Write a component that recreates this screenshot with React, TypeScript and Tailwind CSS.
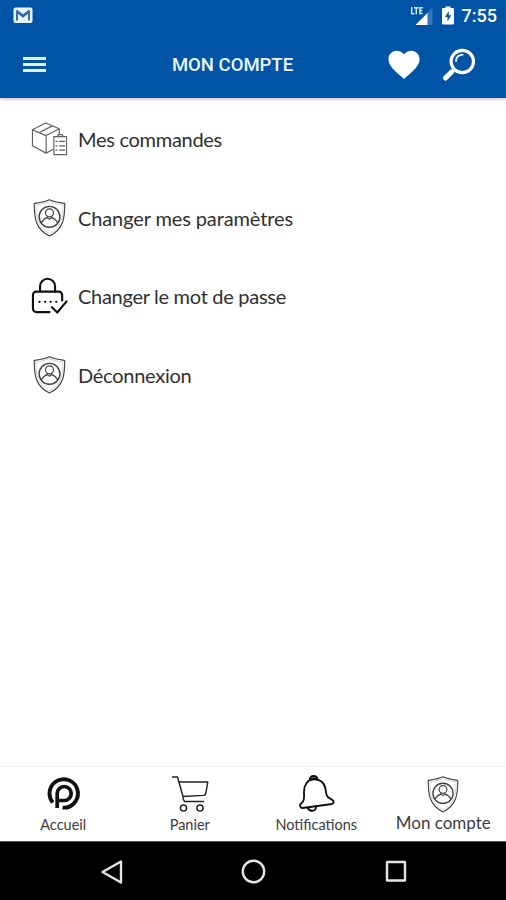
import React from "react";

const lato = "font-['Lato','Liberation_Sans',sans-serif]";
const roboto = "font-['Roboto','Liberation_Sans',sans-serif]";

function GmailIcon() {
  return (
    <svg width="20" height="17" viewBox="0 0 20 17" fill="none">
      <rect x="0.5" y="0.5" width="19" height="15.5" rx="2" fill="#e9f2ff" />
      <path d="M4 13.5V4.8l6 4.7 6-4.7v8.7" stroke="#2a5f9f" strokeWidth="1.8" />
      <path d="M4 3.2l6 4.5 6-4.5" stroke="#2a5f9f" strokeWidth="1" />
    </svg>
  );
}

function SignalIcon() {
  return (
    <svg width="24" height="20" viewBox="0 0 24 20" fill="none">
      <path d="M22.500 1.500V19H5.500z" fill="#3474b8" />
      <path d="M17.500 7V19H5.500z" fill="#fff" />
      <path d="M0 0h13.500v8.500L11 10H0z" fill="#0054a6" />
      <path d="M1.700 1v6.800h2.600M4 1.700h4.600M6.300 1.700v6.600M12.800 1.700H9.900v5.900h2.900M9.900 4.600h2.500" stroke="#d6e6fa" strokeWidth="1.500" />
    </svg>
  );
}

function BatteryIcon() {
  return (
    <svg width="12" height="19" viewBox="0 0 12 19">
      <path d="M3.5 2V.5h5V2H11a1 1 0 0 1 1 1v14.500a1 1 0 0 1-1 1H1a1 1 0 0 1-1-1V3a1 1 0 0 1 1-1z" fill="#fff" />
      <path d="M6.800 5L3 11h2.500v4.500L9.200 9.300H6.800z" fill="#0054a6" />
    </svg>
  );
}

function HeartIcon() {
  return (
    <svg width="32" height="30" viewBox="0 0 32 30">
      <path d="M16 29C11 24 .4 17.500.4 9.300.4 4.200 4.200.7 8.500.7c3.200 0 6 1.500 7.500 3.600C17.500 2.200 20.300.7 23.500.7c4.300 0 8.100 3.500 8.100 8.600C31.600 17.500 21 24 16 29z" fill="#fff" />
    </svg>
  );
}

function SearchIcon() {
  return (
    <svg width="34" height="34" viewBox="0 0 34 34" fill="none" stroke="#fff" strokeLinecap="round">
      <circle cx="20.300" cy="13.500" r="11.200" strokeWidth="3.200" />
      <path d="M12.200 21.800l-3 3" strokeWidth="2.500" />
      <path d="M9.500 24l-6 6" strokeWidth="5" />
      <path d="M14 13c.2-3.800 2.500-6 6.500-6.300" strokeWidth="1.800" />
    </svg>
  );
}

function BoxIcon() {
  return (
    <svg width="38" height="38" viewBox="0 0 38 38" fill="none" stroke="#606060" strokeWidth="1.200" strokeLinejoin="round">
      <path d="M1.500 9.500L15 2.500l14 6L15.500 15.500zM1.500 9.500V26l14 7.500V15.500M29 8.500V15M8 12.500L22 5.500M15.500 33.500l7.500-4" />
      <path d="M23.500 16.500h13V35h-13zM27 16.500l1-2h4l1 2M29 21.500h6M29 26h6M29 30.500h6M25.200 21.500h2M25.200 26h2M25.200 30.500h2" />
    </svg>
  );
}

function ShieldIcon({ size = "h-[38px] w-[33px]" }: { size?: string }) {
  return (
    <svg className={size} viewBox="0 0 33 38" fill="none" stroke="#404040" strokeWidth="1.150" strokeLinejoin="round">
      <path d="M16.500.8C12 3 6.700 3.700 1.200 4.500c.1 13.500.8 25.500 15.300 32.500C31 30 31.700 18 31.800 4.500 26.300 3.700 21 3 16.500.8z" />
      <path d="M16.500 2.800C12.400 4.500 7.800 5.200 3 6c.2 12 1.100 22.300 13.500 28.800C28.900 28.300 29.800 18 30 6 25.200 5.200 20.600 4.500 16.500 2.800z" stroke="#aaa" strokeWidth=".5" />
      <circle cx="16.500" cy="17.800" r="10.400" strokeWidth="1.400" />
      <circle cx="16.500" cy="13.800" r="4" />
      <path d="M8.300 24c1.400-2.800 3.400-4.600 6-5.400l2.200 1.600 2.200-1.600c2.600.8 4.600 2.600 6 5.400M14.300 17v1.800M18.700 17v1.800" />
    </svg>
  );
}

function LockIcon() {
  return (
    <svg width="38" height="38" viewBox="0 0 38 38" fill="none" stroke="#111" strokeWidth="2.200" strokeLinecap="round" strokeLinejoin="round">
      <path d="M9.300 14.500V9a7.700 7.700 0 0 1 15.400 0v5.500" />
      <path d="M19 35.500H5.500A3.500 3.500 0 0 1 2 32V18a3.500 3.500 0 0 1 3.500-3.500h23A3.500 3.500 0 0 1 32 18v5.500" />
      <path d="M21.500 30.500L27 36l9.500-11.500" />
      <path d="M8.700 25h.1M14.500 25h.1M20.200 25h.1M25.900 25h.1" strokeWidth="2.300" />
    </svg>
  );
}

function LogoIcon() {
  return (
    <svg className="ml-[2px]" width="34" height="34" viewBox="0 0 34 34" fill="none" stroke="#111">
      <path d="M5.800 25.500A14.200 14.200 0 1 1 15.500 30.600" strokeWidth="3.900" />
      <path d="M10.200 31V16.500a7 7 0 1 1 7 7h-7" strokeWidth="3.700" />
    </svg>
  );
}

function CartIcon() {
  return (
    <svg width="38" height="38" viewBox="0 0 38 38" fill="none" stroke="#222" strokeWidth="1.450" strokeLinecap="round" strokeLinejoin="round">
      <path d="M1.500 2H6.500l5.500 19.500c-.3 2 .5 3.500 1.500 5h19M8.500 7h28.300l-2 11.500c-.3 1.200-1 1.800-2.300 1.900L12 21.500" />
      <circle cx="12.500" cy="33" r="3.100" />
      <circle cx="29" cy="33" r="3.100" />
    </svg>
  );
}

function BellIcon() {
  return (
    <svg className="ml-[2px]" width="36" height="38" viewBox="0 0 36 38" fill="none" stroke="#111" strokeWidth="1.900" strokeLinecap="round" strokeLinejoin="round">
      <path d="M1.200 31.200c-.4-1.800.7-2.900 2.200-4 2-1.500 1.900-4.200 1.600-8.700C4.600 9.800 8.500 4.700 14.700 4.300c6.500-.4 11 3.800 11.800 9.700.6 4.800.9 7.800 4.700 9.700 2.500 1.200 3.800 2 3.400 3.700-.3 1.400-1.800 1.700-3.200 1.900L3.500 33c-1.400.1-2.100-.5-2.300-1.800z" />
      <path d="M10.800 4.700c0-2.500 1.500-3.700 3.700-3.700s3.900 1.300 3.900 3.700M12.300 4.300c1-1.500 3.600-1.500 4.700 0" />
      <path d="M8.800 33c1 2.200 3 2.800 4.600 2.800 2 0 3.400-1.300 3.700-3.800" />
    </svg>
  );
}

const rows = [
  { label: "Mes commandes", icon: <BoxIcon />, track: "tracking-[-0.290px]" },
  { label: "Changer mes paramètres", icon: <ShieldIcon />, track: "tracking-[-0.120px]" },
  { label: "Changer le mot de passe", icon: <LockIcon />, track: "tracking-[-0.290px]" },
  { label: "Déconnexion", icon: <ShieldIcon />, track: "tracking-[-0.260px]" },
];

const tabs = [
  { label: "Accueil", icon: <LogoIcon />, text: "text-[14.500px] pt-[2px]" },
  { label: "Panier", icon: <CartIcon />, text: "text-[14.500px] pt-[2px]" },
  { label: "Notifications", icon: <BellIcon />, text: "text-[14.500px] pt-[2px]" },
  { label: "Mon compte", icon: <ShieldIcon size="h-[37px] w-[32px]" />, text: "text-[17px] pl-[1px]" },
];

export default function App() {
  return (
    <div className={`flex h-[900px] w-[506px] flex-col overflow-hidden bg-white ${lato}`}>
      <header className={`h-[98px] shrink-0 bg-[#0054a6] text-white shadow-[0_1px_3px_rgba(60,30,30,0.35)] ${roboto}`}>
        <div className="flex h-[31px] items-center justify-between pl-[13px] pr-[9px]">
          <GmailIcon />
          <div className="flex items-center">
            <SignalIcon />
            <span className="ml-[8px]"><BatteryIcon /></span>
            <span className="ml-[8px] text-[18px] font-medium leading-none">7:55</span>
          </div>
        </div>
        <div className="grid h-[67px] grid-cols-[130px_205px_1fr] items-center">
          <div className="ml-[23px] flex w-[23px] flex-col gap-[3px]">
            <span className="h-[3px] bg-[#e6f0fc]" />
            <span className="h-[3px] bg-[#e6f0fc]" />
            <span className="h-[3px] bg-[#e6f0fc]" />
          </div>
          <h1 className="pt-[1px] text-center text-[18.500px] font-medium leading-none text-[#eef4fc]">MON COMPTE</h1>
          <div className="flex items-center gap-[22px] pl-[53px]">
            <HeartIcon />
            <SearchIcon />
          </div>
        </div>
      </header>

      <main className="flex-1 pt-[1.500px]">
        {rows.map((r) => (
          <div key={r.label} className="flex h-[78.700px] items-center pl-[31px] text-[#303030]">
            <span className="flex w-[37px] justify-center">{r.icon}</span>
            <span className={`ml-[10px] text-[20px] leading-none ${r.track}`}>{r.label}</span>
          </div>
        ))}
      </main>

      <nav className="grid h-[75px] shrink-0 grid-cols-4 border-t border-[#f2f2f2] bg-white">
        {tabs.map((t) => (
          <div key={t.label} className="flex flex-col items-center pt-[8px] text-[#3c3c3c]">
            <span className="flex h-[38px] items-center">{t.icon}</span>
            <span className={`leading-[20px] ${t.text}`}>{t.label}</span>
          </div>
        ))}
      </nav>

      <footer className="flex h-[59px] shrink-0 items-center justify-center border-t border-[#555] bg-black pt-[1px]">
        <svg width="308" height="26" viewBox="0 0 308 26" fill="none" stroke="#e4e4e4" strokeWidth="2.400" strokeLinejoin="round">
          <path d="M22 2.500v21L3.500 13z" />
          <circle cx="154.500" cy="12.500" r="10.700" />
          <rect x="288" y="3" width="18" height="18.500" />
        </svg>
      </footer>
    </div>
  );
}
